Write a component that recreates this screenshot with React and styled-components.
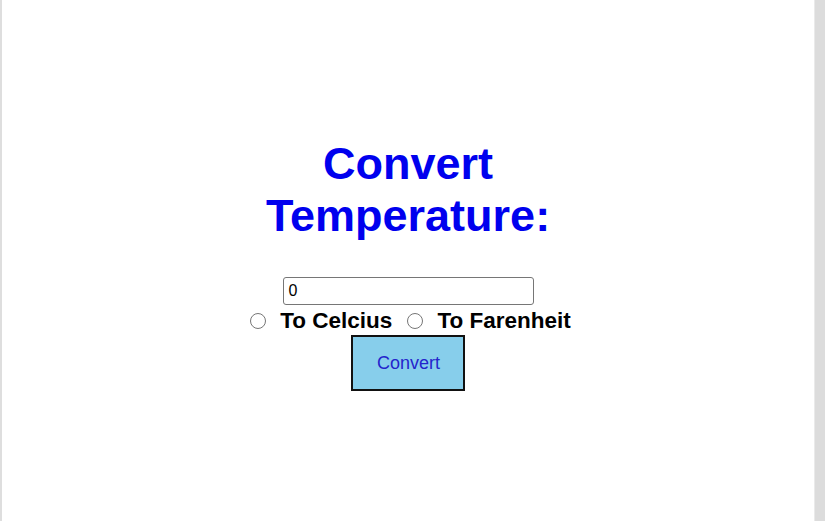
import React, { useState } from 'react'
import styled, { createGlobalStyle } from 'styled-components'

const GlobalStyle = createGlobalStyle`
  html, body {
    margin: 0;
    padding: 0;
    background: #ffffff;
  }
`

const Frame = styled.div`
  display: flex;
  width: 825px;
  height: 521px;
  overflow: hidden;
`

const Page = styled.main`
  flex: 1;
  display: flex;
  flex-direction: column;
  align-items: center;
  padding-top: 138px;
  border-left: 2px solid #dedede;
  font-family: 'Liberation Sans', Arial, sans-serif;
`

const ScrollTrack = styled.div`
  width: 10px;
  background: #dcdcdc;
  border-left: 1px solid #eaeaea;
`

const Title = styled.h1`
  width: 320px;
  margin: 0 0 35px;
  text-align: center;
  font-size: 45px;
  line-height: 52px;
  font-weight: bold;
  color: #0000ee;
`

const Form = styled.form`
  display: flex;
  flex-direction: column;
  align-items: center;
`

const NumberInput = styled.input`
  box-sizing: border-box;
  width: 251px;
  height: 28px;
  margin-left: 2px;
  padding: 1px 4px;
  border: 1px solid #767676;
  border-radius: 3px;
  font-family: 'Liberation Sans', Arial, sans-serif;
  font-size: 16px;
  color: #000;
  outline: none;
`

const Options = styled.div`
  display: flex;
  align-items: center;
  gap: 15px;
  margin-top: 3px;
  margin-left: 5px;
`

const Option = styled.label`
  display: flex;
  align-items: center;
  font-size: 22.5px;
  font-weight: bold;
  line-height: 25px;
  color: #000;
`

const Radio = styled.input`
  width: 16px;
  height: 16px;
  margin: 0 14px 0 0;
  accent-color: #767676;
`

const ConvertButton = styled.button`
  box-sizing: border-box;
  width: 114px;
  height: 56px;
  margin-top: 2px;
  margin-left: 1px;
  background: #87ceeb;
  border: 2px solid #111;
  font-family: 'Liberation Sans', Arial, sans-serif;
  font-size: 18px;
  color: #2424cc;
  cursor: pointer;
`

export default function App() {
  const [value, setValue] = useState('0')
  const [mode, setMode] = useState('')
  return (
    <>
      <GlobalStyle />
      <Frame>
        <Page>
          <Title>Convert Temperature:</Title>
          <Form onSubmit={e => e.preventDefault()}>
            <NumberInput value={value} onChange={e => setValue(e.target.value)} />
            <Options>
              <Option>
                <Radio type="radio" name="unit" checked={mode === 'c'} onChange={() => setMode('c')} />
                To Celcius
              </Option>
              <Option>
                <Radio type="radio" name="unit" checked={mode === 'f'} onChange={() => setMode('f')} />
                To Farenheit
              </Option>
            </Options>
            <ConvertButton type="submit">Convert</ConvertButton>
          </Form>
        </Page>
        <ScrollTrack />
      </Frame>
    </>
  )
}
